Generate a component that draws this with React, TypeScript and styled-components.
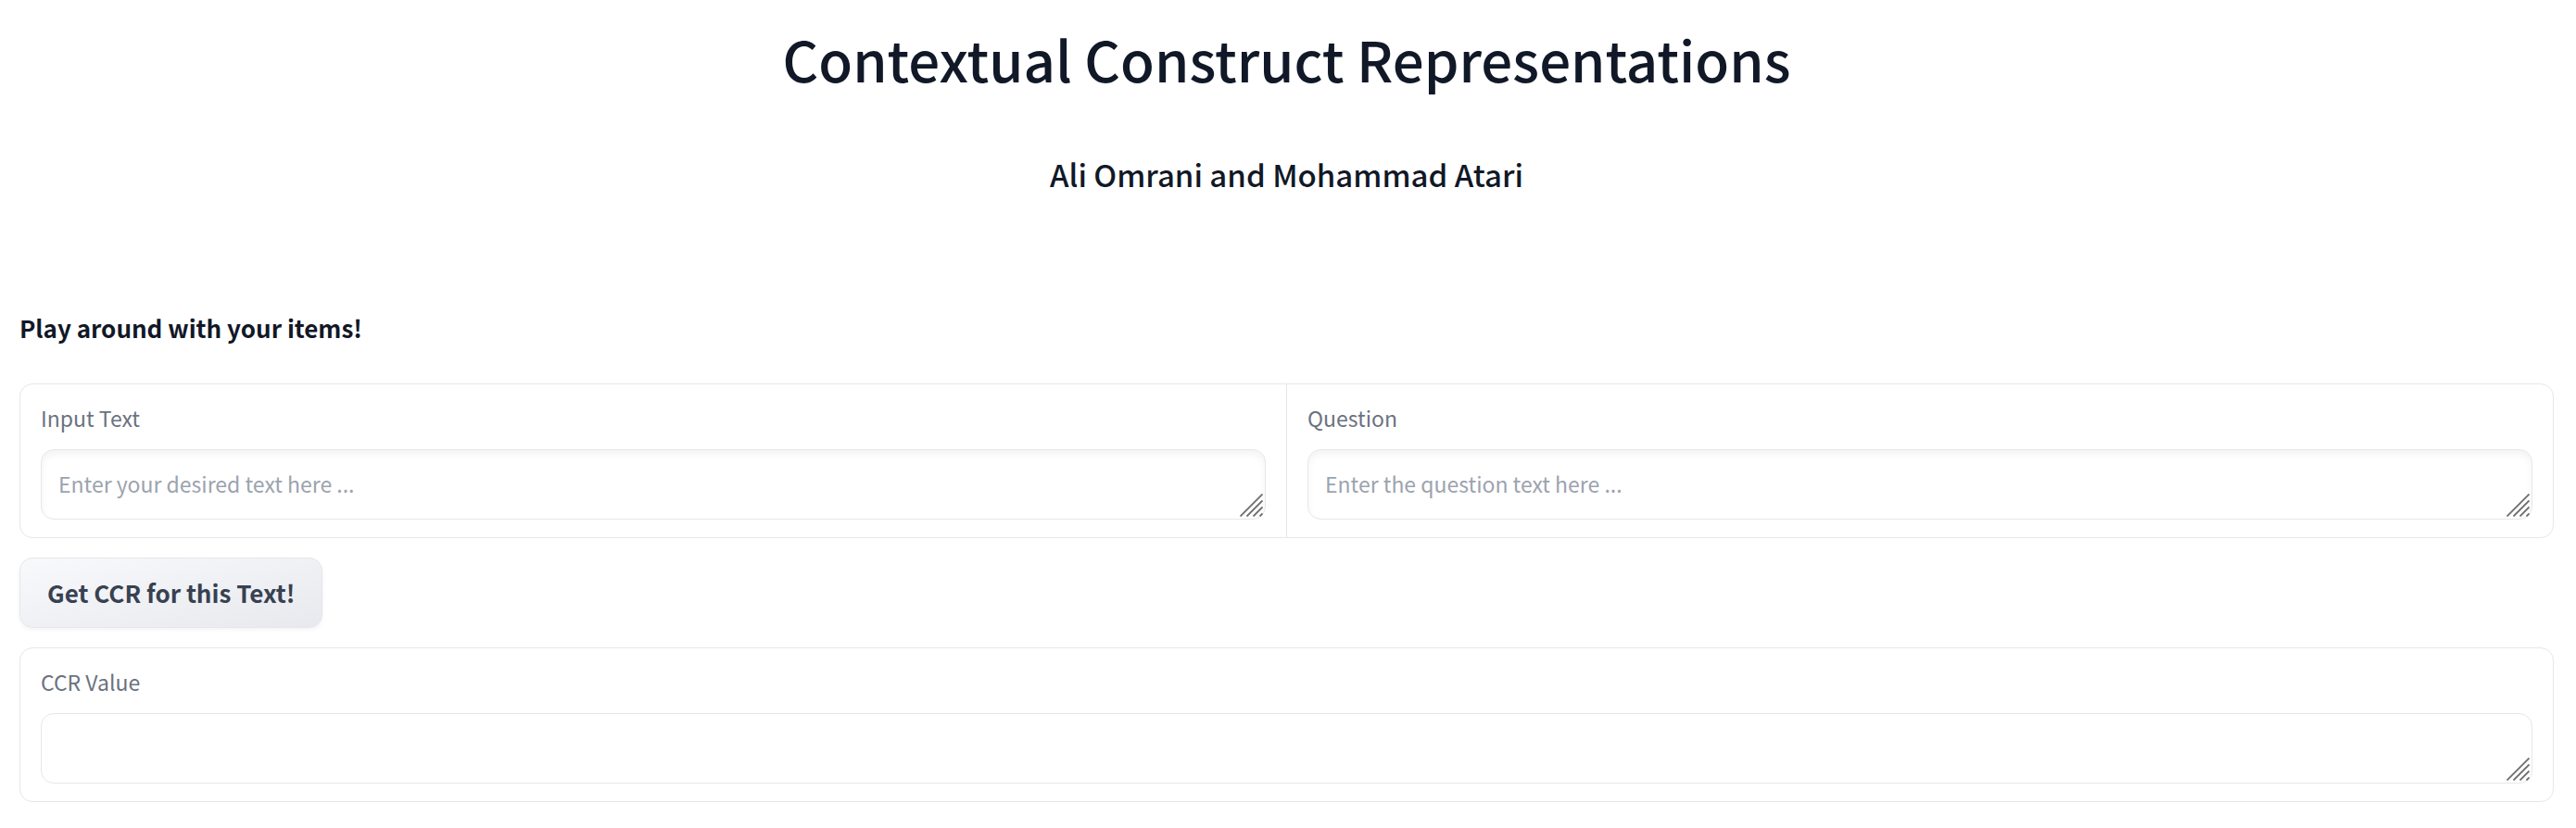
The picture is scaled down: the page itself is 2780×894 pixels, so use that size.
import React, { useId } from "react";
import styled, { createGlobalStyle } from "styled-components";

const GlobalStyle = createGlobalStyle`
  *, *::before, *::after { box-sizing: border-box; }
  body {
    margin: 0;
    background: #ffffff;
    color: #111827;
    font-family: "Noto Sans CJK SC", "Noto Sans", sans-serif;
  }
`;

const Page = styled.main`
  display: flex;
  flex-direction: column;
  padding: 15px 24px 28px 21px;
`;

const Header = styled.header`
  display: flex;
  flex-direction: column;
  align-items: center;
  gap: 47px;
  text-align: center;
`;

const Title = styled.h1`
  margin: 0;
  font-size: 60px;
  line-height: 96px;
  font-weight: 500;
`;

const Authors = styled.h2`
  margin: 0;
  font-size: 33px;
  line-height: 60px;
  font-weight: 500;
`;

const SectionTitle = styled.h3`
  margin: 114px 0 38px;
  font-size: 26px;
  line-height: 44px;
  font-weight: 700;
`;

const Form = styled.form`
  display: flex;
  flex-direction: column;
  align-items: flex-start;
  gap: 21px;
`;

const Panel = styled.div`
  display: flex;
  width: 100%;
  border: 1px solid #e5e7eb;
  border-radius: 14px;
`;

const FieldCell = styled.div`
  flex: 1;
  min-width: 0;
  padding: 18px 22px 19px;

  & + & {
    border-left: 1px solid #e5e7eb;
  }
`;

const FieldLabel = styled.label`
  display: block;
  margin-bottom: 16px;
  color: #6b7280;
  font-size: 23px;
  line-height: 36px;
`;

const FieldBody = styled.div`
  position: relative;
  display: flex;
`;

const TextArea = styled.textarea<{ $inset: boolean }>`
  flex: 1;
  min-width: 0;
  height: 76px;
  padding: 18px;
  border: 1px solid #e5e7eb;
  border-radius: 14px;
  outline: none;
  resize: none;
  overflow: hidden;
  background: #ffffff;
  box-shadow: ${(p) => (p.$inset ? "inset 0 4px 8px rgba(0, 0, 0, 0.05)" : "none")};
  color: #111827;
  font-family: inherit;
  font-size: 23px;
  line-height: 36px;

  &::placeholder {
    color: #9ca3af;
    opacity: 1;
  }
`;

const Grip = styled.svg`
  position: absolute;
  right: 3px;
  bottom: 3px;
  width: 25px;
  height: 25px;
  pointer-events: none;
`;

const SubmitButton = styled.button`
  height: 76px;
  padding: 0 29px;
  border: 1px solid #e5e7eb;
  border-radius: 14px;
  background: linear-gradient(to bottom right, #f8f9fb, #e8e9ee);
  box-shadow: 0 2px 4px rgba(0, 0, 0, 0.05);
  color: #374151;
  font-family: inherit;
  font-size: 26px;
  line-height: 44px;
  font-weight: 700;
  cursor: pointer;
`;

type FieldProps = {
  label: string;
  placeholder?: string;
  readOnly?: boolean;
};

function Field({ label, placeholder, readOnly = false }: FieldProps) {
  const id = useId();
  return (
    <FieldCell>
      <FieldLabel htmlFor={id}>{label}</FieldLabel>
      <FieldBody>
        <TextArea id={id} rows={1} placeholder={placeholder} readOnly={readOnly} $inset={!readOnly} />
        <Grip viewBox="0 0 25 25" aria-hidden="true">
          <path
            d="M.5 24.5L24.5 .5M7.5 24.5L24.5 7.5M14.5 24.5L24.5 14.5M21.5 24.5L24.5 21.5"
            stroke="#6e6e6e"
            strokeWidth="1.8"
            fill="none"
          />
        </Grip>
      </FieldBody>
    </FieldCell>
  );
}

export default function App() {
  return (
    <>
      <GlobalStyle />
      <Page>
        <Header>
          <Title>Contextual Construct Representations</Title>
          <Authors>Ali Omrani and Mohammad Atari</Authors>
        </Header>
        <SectionTitle>Play around with your items!</SectionTitle>
        <Form onSubmit={(e) => e.preventDefault()}>
          <Panel>
            <Field label="Input Text" placeholder="Enter your desired text here ..." />
            <Field label="Question" placeholder="Enter the question text here ..." />
          </Panel>
          <SubmitButton type="submit">Get CCR for this Text!</SubmitButton>
          <Panel>
            <Field label="CCR Value" readOnly />
          </Panel>
        </Form>
      </Page>
    </>
  );
}
